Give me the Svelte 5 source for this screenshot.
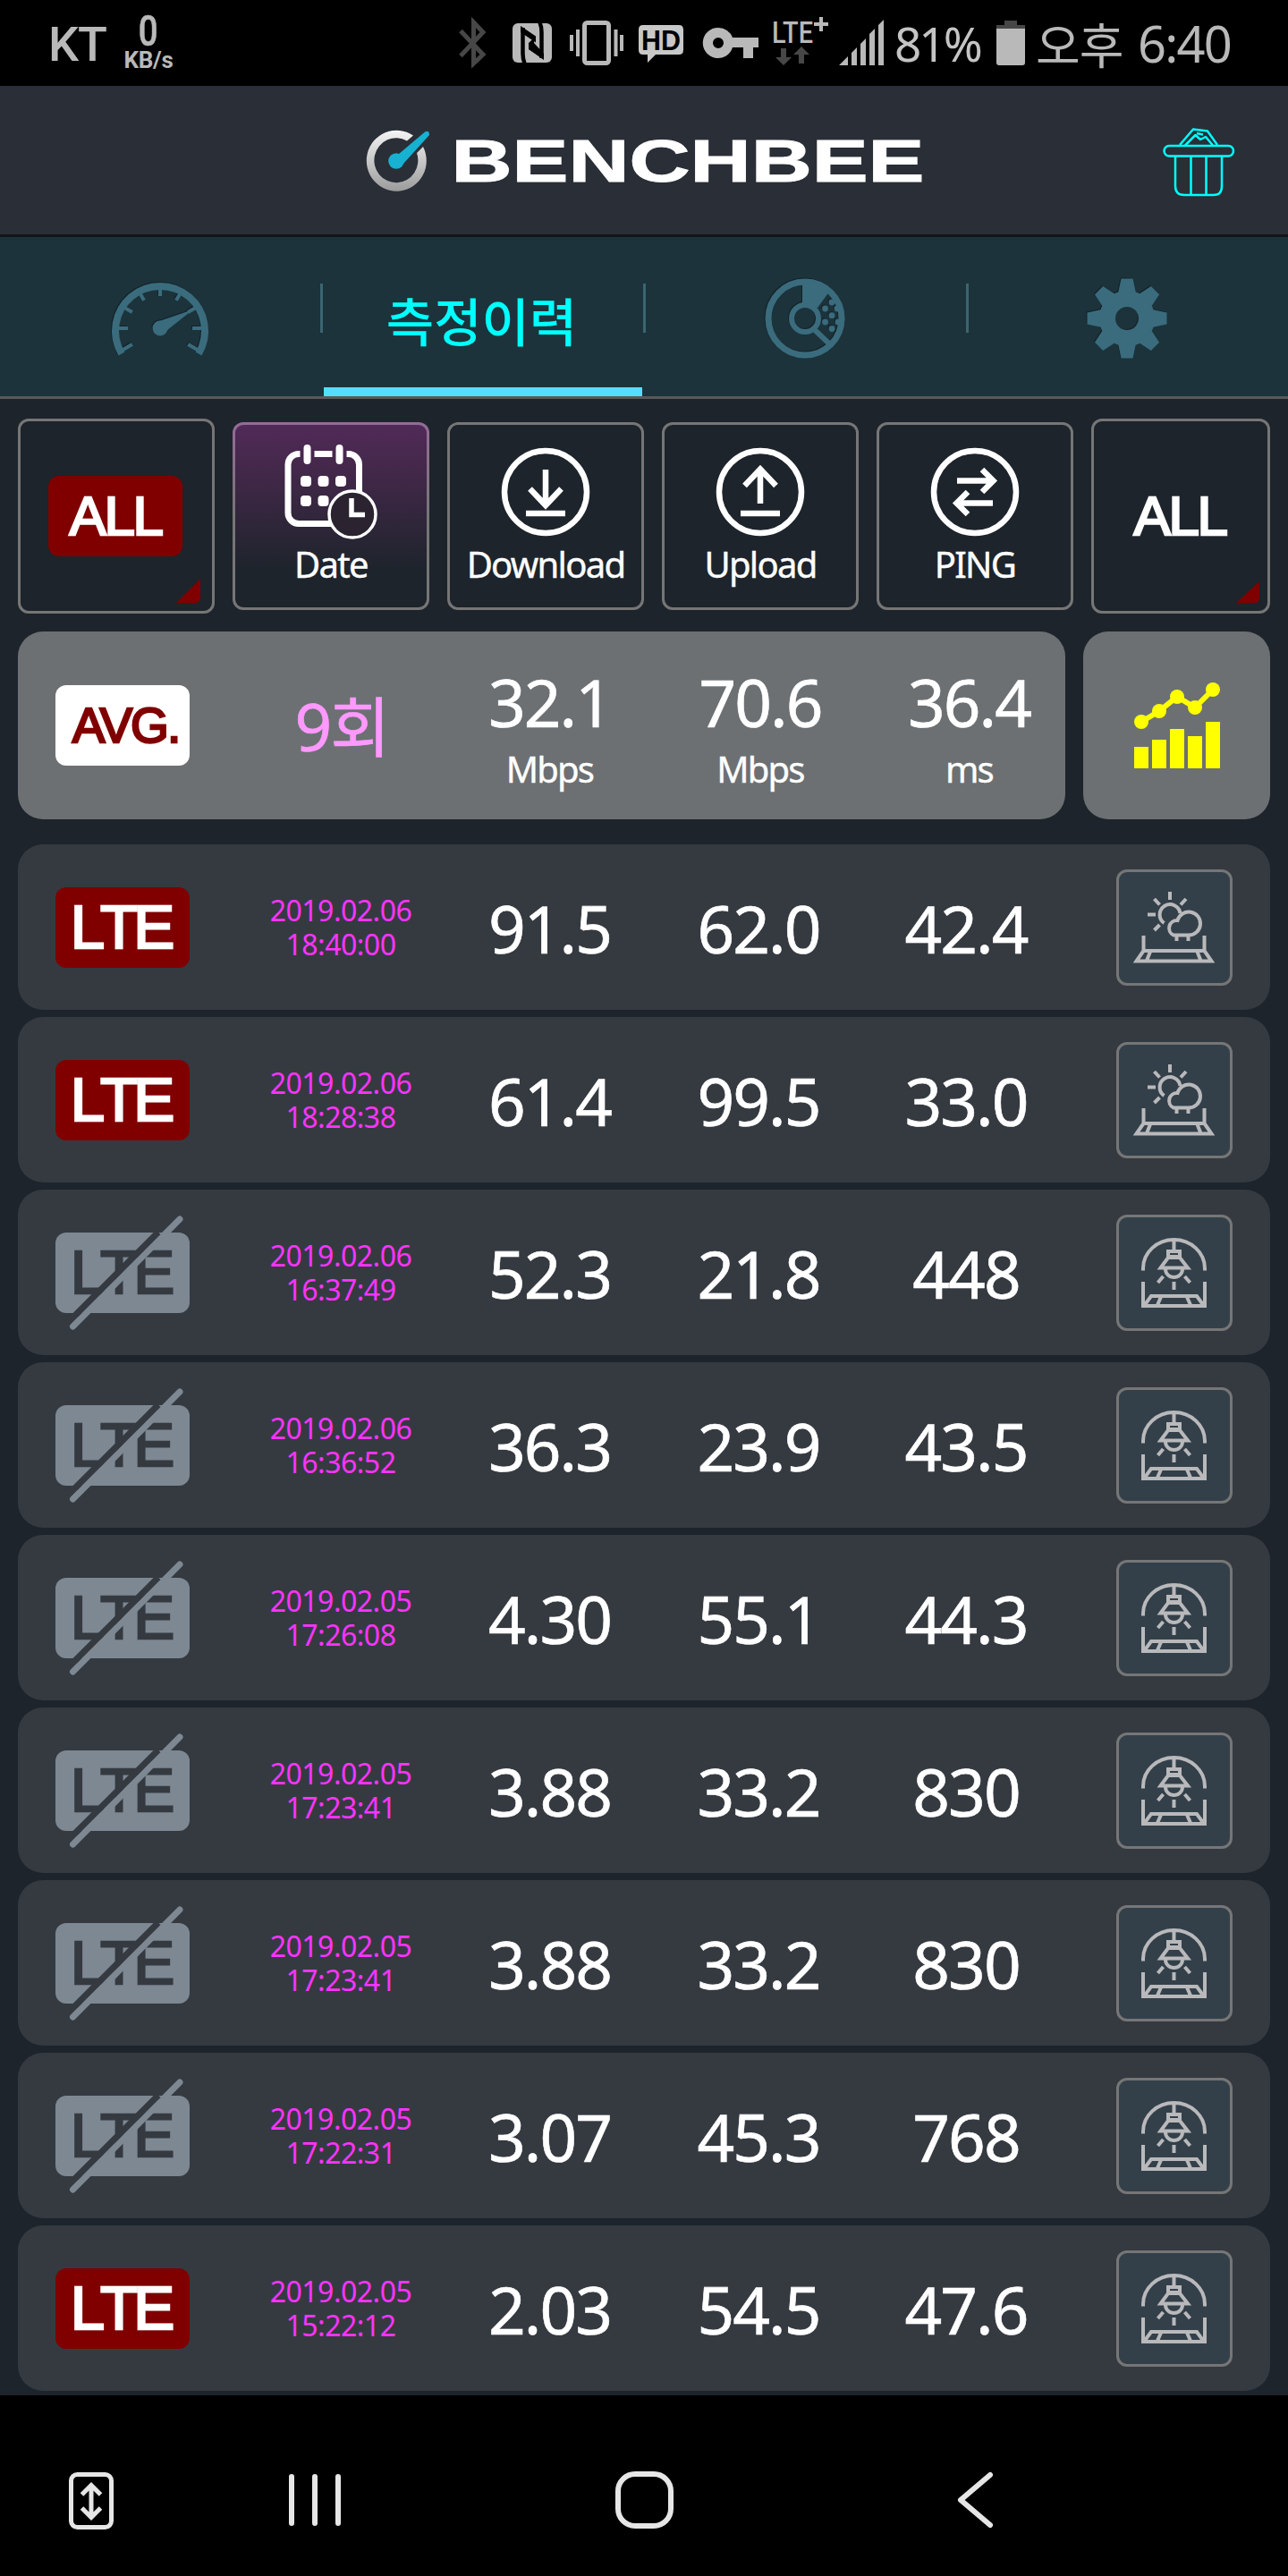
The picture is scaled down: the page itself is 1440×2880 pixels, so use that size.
<script>
  const gaugeTicks = [-120, -90, -60, -30, 0, 30, 60, 90, 120];
  const gearTeeth = [0, 45, 90, 135, 180, 225, 270, 315];

  const average = {
    count: '9회',
    down: '32.1',
    up: '70.6',
    ping: '36.4',
  };

  const records = [
    { on: true, date: '2019.02.06', time: '18:40:00', down: '91.5', up: '62.0', ping: '42.4', place: 'outdoor' },
    { on: true, date: '2019.02.06', time: '18:28:38', down: '61.4', up: '99.5', ping: '33.0', place: 'outdoor' },
    { on: false, date: '2019.02.06', time: '16:37:49', down: '52.3', up: '21.8', ping: '448', place: 'indoor' },
    { on: false, date: '2019.02.06', time: '16:36:52', down: '36.3', up: '23.9', ping: '43.5', place: 'indoor' },
    { on: false, date: '2019.02.05', time: '17:26:08', down: '4.30', up: '55.1', ping: '44.3', place: 'indoor' },
    { on: false, date: '2019.02.05', time: '17:23:41', down: '3.88', up: '33.2', ping: '830', place: 'indoor' },
    { on: false, date: '2019.02.05', time: '17:23:41', down: '3.88', up: '33.2', ping: '830', place: 'indoor' },
    { on: false, date: '2019.02.05', time: '17:22:31', down: '3.07', up: '45.3', ping: '768', place: 'indoor' },
    { on: true, date: '2019.02.05', time: '15:22:12', down: '2.03', up: '54.5', ping: '47.6', place: 'indoor' },
  ];
</script>

<div class="screen">
  <div class="status-bar">
    <span class="carrier">KT</span>
    <div class="net-speed">
      <span class="speed-value">0</span>
      <span class="speed-unit">KB/s</span>
    </div>
    <svg class="status-icons" viewBox="505 0 490 96" width="490" height="96">
      <path d="M515 34.500L540 61L529.500 71V25L540 36L515 62.500" fill="none" stroke="#474747" stroke-width="5" />
      <rect x="573" y="26" width="44" height="44" rx="6" fill="#b9b9b9" />
      <path d="M582 29L599 41V48L591 42.500V49L608 67V71L591 54V49L599 56V41Z" fill="none" />
      <path d="M582 29L599 40.500V47.500L582 36ZM591 48L608 60V67L591 55Z" />
      <path d="M584.500 31V60Q584.500 66 586.500 71M605.500 65V36Q605.500 30 603.500 25" fill="none" stroke="#000" stroke-width="4.500" />
      <path d="M597 42.500V48L608 60V66L591 55V48" />
      <rect x="653.500" y="25.500" width="27" height="45" rx="3" fill="none" stroke="#b9b9b9" stroke-width="5" />
      <path d="M639 39V57M646 33V63M688.500 33V63M695 39V57" stroke="#b9b9b9" stroke-width="4" />
      <path d="M719 28H759Q764 28 764 33V56Q764 61 759 61H733L724 70V61H719Q714 61 714 56V33Q714 28 719 28Z" fill="#c8c8c8" />
      <text x="717" y="55.500" class="hd" textLength="44" lengthAdjust="spacingAndGlyphs">HD</text>
      <path d="M803 31a17 17 0 1 0 16 22h12v12h11v-12h6v-11h-29a17 17 0 0 0-16-11zM803 42a6 6 0 1 1 0 12a6 6 0 0 1 0-12z" fill="#b9b9b9" fill-rule="evenodd" />
      <text x="863" y="48" class="lte" textLength="46" lengthAdjust="spacingAndGlyphs">LTE</text>
      <path d="M918 19V35M910 27H926" stroke="#b9b9b9" stroke-width="4" />
      <path d="M873 54H879V64H885L876 73L867 64H873ZM893 71H899V61H905L896 52L887 61H893Z" fill="#474747" />
      <path d="M938 73L948 63V73ZM952 59L958 53V73H952ZM962 49L968 43V73H962ZM972 38L978 32V73H972ZM982 28L988 22V73H982Z" fill="#b9b9b9" />
    </svg>
    <span class="battery-level">81%</span>
    <svg class="battery" viewBox="0 0 32 50" width="32" height="50">
      <path d="M9 0H23V5H32V10H0V5H9Z" fill="#474747" />
      <path d="M0 9H32V47Q32 50 29 50H3Q0 50 0 47Z" fill="#b9b9b9" />
    </svg>
    <span class="meridiem">오후</span>
    <span class="clock">6:40</span>
  </div>

  <header class="app-header">
    <svg class="logo" viewBox="400 130 640 100" width="640" height="100">
      <defs>
        <linearGradient id="ring" x1="0" y1="0" x2="0" y2="1">
          <stop offset="0" stop-color="#f4f4f4" />
          <stop offset="1" stop-color="#9c9c9c" />
        </linearGradient>
      </defs>
      <path
        d="M462 152.500A33.500 34 0 1 0 473 165L466 172A24.500 25 0 1 1 455 158.500Z"
        fill="url(#ring)"
      />
      <path d="M446 173L475 148.500Q480 146 480 152L451 184Z" fill="#17b1d1" />
      <circle cx="443" cy="181" r="8.800" fill="#17b1d1" />
      <text x="504.500" y="203.500" class="brand" textLength="529" lengthAdjust="spacingAndGlyphs">BENCHBEE</text>
    </svg>
    <svg class="trash" viewBox="1298 140 84 82" width="84" height="82">
      <g fill="none" stroke="#0ff" stroke-width="2.500" stroke-linejoin="round">
        <rect x="1301.500" y="163" width="77.500" height="11.500" rx="5.700" />
        <path d="M1319 162L1334 144.500L1350 146.500L1361 162M1325 162.500L1336.500 151L1342 156L1348 153L1356 162.500M1338 149L1345 150.500" />
        <path d="M1314 175V208Q1314 218 1324 218H1357Q1366 218 1366 208V175M1331.500 175V218M1348.500 175V218" />
      </g>
    </svg>
  </header>

  <nav class="tabs">
    <div class="tab">
      <svg viewBox="-56 -56 112 92" width="112" height="92" class="tab-icon gauge">
        <path d="M-43 28.500A50 50 0 1 1 43 28.500" fill="none" stroke="#3a6c7d" stroke-width="8" />
        {#each gaugeTicks as angle}
          <path d="M-2 -48H2V-36H-2Z" transform="rotate({angle})" />
        {/each}
        <circle r="8.500" />
        <path d="M-1 -8L37 -21L8 2Z" />
      </svg>
    </div>
    <div class="tab active">측정이력</div>
    <div class="tab">
      <svg viewBox="-47 -47 94 94" width="94" height="94" class="tab-icon">
        <circle r="41" fill="none" stroke="#3a6c7d" stroke-width="7" />
        <circle r="15" fill="none" stroke="#3a6c7d" stroke-width="6" />
        <path d="M-3 -41L0 -42A42 42 0 0 1 28 -31L14 -12L-3 -15Z" />
        <path d="M11 13L30 31" stroke="#3a6c7d" stroke-width="6" />
        {#each [[22.5, -11], [30, -18], [22.5, 4], [30, -3.3], [37, 4], [30, 11.5], [36, -11]] as [x, y]}
          <circle cx={x} cy={y} r="3.400" />
        {/each}
      </svg>
    </div>
    <div class="tab">
      <svg viewBox="-47 -47 94 94" width="94" height="94" class="tab-icon">
        <circle r="22" fill="none" stroke="#3a6c7d" stroke-width="18" />
        {#each gearTeeth as angle}
          <path d="M-10 -28L-6.500 -44.500H6.500L10 -28Z" transform="rotate({angle})" />
        {/each}
      </svg>
    </div>
  </nav>

  <main>
    <div class="filters">
      <div class="filter tall">
        <span class="badge all">ALL</span>
        <span class="corner"></span>
      </div>
      <div class="filter selected">
        <svg viewBox="310 492 120 116" width="120" height="116">
          <rect x="322" y="507.500" width="79.500" height="78" rx="12" fill="none" stroke="#fff" stroke-width="7" />
          <path d="M343.500 500V512M379.500 500V512" stroke="#492850" stroke-width="16" />
          <path d="M343.500 501V515M379.500 501V515" stroke="#fff" stroke-width="8" stroke-linecap="round" />
          {#each [[342, 538], [361.5, 538], [381, 538], [342, 560], [361.5, 560]] as [x, y]}
            <rect x={x - 6} y={y - 6} width="12" height="12" rx="4" fill="#fff" />
          {/each}
          <circle cx="394" cy="575" r="26" fill="#2b2430" stroke="#fff" stroke-width="3.500" />
          <path d="M393 557V575.500H408" fill="none" stroke="#fff" stroke-width="5.500" />
        </svg>
        <span class="filter-name">Date</span>
      </div>
      <div class="filter">
        <svg viewBox="-60 -58 120 116" width="120" height="116">
          <g class="round-icon">
            <circle r="46" />
            <path d="M0 -25V13M-17.500 -3.500L0 15L17.500 -3.500M-22 24H22" />
          </g>
        </svg>
        <span class="filter-name">Download</span>
      </div>
      <div class="filter">
        <svg viewBox="-60 -58 120 116" width="120" height="116">
          <g class="round-icon">
            <circle r="46" />
            <path d="M0 13V-25M-17.500 -7L0 -25.500L17.500 -7M-22 24H22" />
          </g>
        </svg>
        <span class="filter-name">Upload</span>
      </div>
      <div class="filter">
        <svg viewBox="-60 -58 120 116" width="120" height="116">
          <g class="round-icon">
            <circle r="46" />
            <path d="M-20 -12.500H20M8 -25L20.500 -12.500L8 0M20 12.500H-20M-8 0L-20.500 12.500L-8 25" />
          </g>
        </svg>
        <span class="filter-name">PING</span>
      </div>
      <div class="filter tall last">
        <span class="badge plain">ALL</span>
        <span class="corner small"></span>
      </div>
    </div>

    <div class="summary">
      <div class="average">
        <span class="badge avg">AVG.</span>
        <span class="count">{average.count}</span>
        <div class="metric"><span class="value">{average.down}</span><span class="unit">Mbps</span></div>
        <div class="metric"><span class="value">{average.up}</span><span class="unit">Mbps</span></div>
        <div class="metric ping"><span class="value">{average.ping}</span><span class="unit">ms</span></div>
      </div>
      <div class="chart-button">
        <svg viewBox="1265 761 100 100" width="100" height="100" fill="#ff0">
          <path d="M1267 835h16v24h-16zM1287 827h16v32h-16zM1307 815h16v44h-16zM1327 823h16v36h-16zM1347 807h16v52h-16z" />
          <path d="M1275 807L1295 795L1315 779L1335 791L1355 771" fill="none" stroke="#ff0" stroke-width="6" />
          {#each [[1275, 807], [1295, 795], [1315, 779], [1335, 791], [1355, 771]] as [x, y]}
            <circle cx={x} cy={y} r="8" />
          {/each}
        </svg>
      </div>
    </div>

    <div class="records">
      {#each records as record}
        <div class="record">
          {#if record.on}
            <span class="badge lte-on">LTE</span>
          {:else}
            <span class="badge lte-off">
              LTE
              <svg class="slash" viewBox="0 -22 150 134" width="150" height="134">
                <path d="M19.500 105L139 -15" stroke="#7d8893" stroke-width="7" stroke-linecap="round" />
                <path d="M22 92.500L115 -0.500" stroke="#353a41" stroke-width="7" />
              </svg>
            </span>
          {/if}
          <div class="when"><span>{record.date}</span><span>{record.time}</span></div>
          <span class="value">{record.down}</span>
          <span class="value">{record.up}</span>
          <span class="value">{record.ping}</span>
          <div class="place">
            <svg viewBox="3 3 124 124" width="124" height="124">
              {#if record.place === 'outdoor'}
                <path d="M60 25V34M42.500 33L48.500 39.500M78 33L72 39.500M35 50.500H44M42.500 68L48.500 62" />
                <path d="M53.500 60A11.500 11.500 0 1 1 71.500 49" />
                <path d="M64 73.500H81A13 13 0 1 0 68.500 57A8.700 8.700 0 0 0 64 73.500ZM67.500 73V80M80.500 73V80" />
                <path d="M30.500 74V91H98.500V74M30.500 91L22.500 102.500H106.500L98.500 91M38 92L34 102M90.500 92L94.500 102" />
              {:else}
                <path d="M30 62.500V60A34.500 32 0 0 1 99 60V62.500M64.500 28V40" />
                <path d="M58 41H71V47H58ZM58 48H71L80 59.500H49.500ZM55 61A9.500 9 0 0 0 74 61" />
                <path d="M52.500 69L46.500 76M64.500 75V84M76.500 69L82.500 76" />
                <path d="M30 75V102H99V75M31 102L39 91H90L98 102M50 92L46 101M79 92L83 101" />
              {/if}
            </svg>
          </div>
        </div>
      {/each}
    </div>
  </main>

  <div class="nav-bar">
    <svg viewBox="0 2678 1440 202" width="1440" height="202" fill="none" stroke="#e6e6e6">
      <rect x="79.500" y="2766.500" width="45" height="59" rx="7" stroke-width="5" />
      <path d="M102 2780V2813M91.500 2789L102 2778.500L112.500 2789M91.500 2804L102 2814.500L112.500 2804" stroke-width="5" />
      <path d="M326 2769V2821M352 2769V2821M378 2769V2821" stroke-width="6" stroke-linecap="round" />
      <rect x="691" y="2766" width="59" height="58" rx="19" stroke-width="6" />
      <path d="M1107 2767L1074 2795L1107 2823" stroke-width="6" stroke-linecap="round" stroke-linejoin="round" />
    </svg>
  </div>
</div>

<style>
  :global(body) {
    margin: 0;
    background: #1d242b;
  }

  .screen {
    width: 1440px;
    height: 2880px;
    overflow: hidden;
    display: flex;
    flex-direction: column;
    background: #1d242b;
    color: #fff;
    font-family: 'Noto Sans', 'Noto Sans CJK KR', sans-serif;
  }

  svg {
    display: block;
    flex: none;
  }

  .status-bar {
    display: flex;
    align-items: center;
    height: 96px;
    flex: none;
    background: #000;
    color: #b9b9b9;
    white-space: nowrap;
  }

  .carrier {
    width: 77px;
    padding: 3px 0 0 54px;
    font: 500 54px/1 Roboto, sans-serif;
    letter-spacing: -1px;
  }

  .net-speed {
    display: flex;
    flex-direction: column;
    align-items: center;
    width: 70px;
    margin-right: 304px;
    font-family: Roboto, sans-serif;
    font-weight: 500;
  }

  .speed-value {
    font-size: 48px;
    line-height: 38px;
    transform: scaleX(0.8);
    -webkit-text-stroke: 0.6px currentColor;
  }

  .speed-unit {
    font-size: 26px;
    line-height: 26px;
    font-weight: 700;
    letter-spacing: -0.3px;
  }

  .hd {
    font: bold 31px 'Liberation Sans', sans-serif;
    fill: #000;
  }

  .lte {
    font: 500 33px Roboto, sans-serif;
    fill: #b9b9b9;
  }

  .battery-level {
    width: 114px;
    padding-left: 5px;
    font-size: 53px;
    letter-spacing: -3px;
    color: #c4c4c4;
  }

  .meridiem {
    width: 114px;
    padding-left: 12px;
    font-size: 54px;
    letter-spacing: -1px;
  }

  .clock {
    font-size: 56px;
    letter-spacing: -1.8px;
  }

  .app-header {
    display: flex;
    align-items: center;
    justify-content: space-between;
    box-sizing: border-box;
    height: 169px;
    flex: none;
    padding: 0 58px 0 400px;
    background: #2a2e36;
    border-bottom: 3px solid #131518;
  }

  .brand {
    font: bold 66px 'Liberation Sans', sans-serif;
    fill: #fff;
    stroke: #fff;
    stroke-width: 1px;
  }

  .trash {
    margin-top: 4px;
  }

  .tabs {
    display: grid;
    grid-template-columns: 358px 361px 361px 360px;
    box-sizing: border-box;
    height: 181px;
    flex: none;
    background: #1c333b;
    border-bottom: 3px solid #595959;
  }

  .tab {
    display: flex;
    align-items: center;
    justify-content: center;
    box-sizing: border-box;
    padding-top: 4px;
    background: linear-gradient(#3c6570, #3c6570) left 0 top 52px / 3px 55px no-repeat;
  }

  .tab:first-child {
    background: none;
  }

  .tab.active {
    padding: 6px 0 0 0;
    color: #0ff;
    font-family: 'Noto Sans CJK KR', sans-serif;
    font-weight: 500;
    font-size: 58px;
    line-height: 1;
    background:
      linear-gradient(#3c6570, #3c6570) left 0 top 52px / 3px 55px no-repeat,
      linear-gradient(#56defc, #56defc) left 4px bottom 0 / 356px 10px no-repeat;
  }

  .tab-icon {
    fill: #3a6c7d;
    overflow: visible;
    filter: drop-shadow(-1px -1px 0 #142329);
  }

  .gauge {
    margin-top: 2px;
  }

  main {
    flex: none;
    height: 2232px;
    overflow: hidden;
    padding: 0 20px;
    box-sizing: border-box;
  }

  .filters {
    display: flex;
    gap: 20px;
    align-items: center;
    padding-top: 22px;
    height: 218px;
  }

  .filter {
    position: relative;
    box-sizing: border-box;
    width: 220px;
    height: 210px;
    border: 3px solid #767676;
    border-radius: 12px;
    display: flex;
    flex-direction: column;
    align-items: center;
    padding-top: 17px;
  }

  .filter.tall {
    height: 218px;
    justify-content: center;
    padding: 0;
  }

  .filter.last {
    width: 200px;
  }

  .filter.selected {
    border-color: transparent;
    background:
      linear-gradient(#512a58, #43284a 25%, #1d242b 80%) padding-box,
      linear-gradient(#946b97, #767676 50%) border-box;
  }

  .filter-name {
    font-size: 40px;
    line-height: 46px;
    letter-spacing: -1.7px;
    -webkit-text-stroke: 0.4px currentColor;
  }

  .corner {
    position: absolute;
    right: 13px;
    bottom: 9px;
    width: 27px;
    height: 27px;
    background: #800000;
    border-bottom-right-radius: 5px;
    clip-path: polygon(100% 0, 100% 100%, 0 100%);
  }

  .corner.small {
    right: 9px;
    width: 26px;
    height: 24px;
  }

  .round-icon {
    fill: none;
    stroke: #fff;
    stroke-width: 6.5px;
  }

  .badge {
    position: relative;
    display: flex;
    align-items: center;
    justify-content: center;
    box-sizing: border-box;
    width: 150px;
    height: 90px;
    border-radius: 12px;
    font-family: 'Liberation Sans', sans-serif;
    line-height: 1;
    -webkit-text-stroke: 2.5px currentColor;
  }

  .filter .badge {
    margin-right: 2px;
  }

  .all {
    background: #800000;
    font-size: 62px;
    letter-spacing: -2.5px;
  }

  .plain {
    font-size: 62px;
    letter-spacing: -2.5px;
  }

  .avg {
    background: #fff;
    color: #800000;
    font-size: 55px;
    letter-spacing: -2px;
    padding-left: 7px;
  }

  .lte-on {
    background: #800000;
    font-size: 69px;
    font-kerning: none;
    letter-spacing: -5px;
    padding-right: 5px;
  }

  .lte-off {
    background: #7d8893;
    color: #353a41;
    font-size: 69px;
    font-kerning: none;
    letter-spacing: -5px;
    padding-right: 5px;
  }

  .slash {
    position: absolute;
    left: 0;
    top: -22px;
  }

  .summary {
    display: flex;
    gap: 20px;
    margin-top: 20px;
    height: 210px;
  }

  .average {
    display: grid;
    grid-template-columns: 202px 234px 233px 238px 222px;
    align-items: center;
    box-sizing: border-box;
    width: 1171px;
    padding-left: 42px;
    background: #6c7073;
    border-radius: 28px;
  }

  .count {
    text-align: center;
    color: #ff99ff;
    font-size: 73px;
    line-height: 1;
    letter-spacing: -2px;
    padding-left: 2px;
    -webkit-text-stroke: 0.6px currentColor;
  }

  .metric {
    display: flex;
    flex-direction: column;
    align-items: center;
    padding-top: 18px;
  }

  .metric .value {
    line-height: 80px;
  }

  .metric.ping {
    padding-left: 7px;
  }

  .unit {
    font-size: 40px;
    line-height: 70px;
    letter-spacing: -1.8px;
    -webkit-text-stroke: 0.4px currentColor;
  }

  .value {
    font-size: 73px;
    line-height: 1;
    letter-spacing: -1.9px;
    text-align: center;
    -webkit-text-stroke: 0.6px currentColor;
  }

  .chart-button {
    display: flex;
    align-items: center;
    justify-content: center;
    width: 209px;
    background: #6c7073;
    border-radius: 28px;
  }

  .records {
    display: flex;
    flex-direction: column;
    gap: 8px;
    margin-top: 28px;
  }

  .record {
    display: grid;
    grid-template-columns: 202px 234px 233px 234px 230px 1fr;
    align-items: center;
    box-sizing: border-box;
    height: 185px;
    padding: 0 42px;
    background: #353a41;
    border-radius: 28px;
  }

  .record .value {
    padding-top: 2px;
  }

  .when {
    display: flex;
    flex-direction: column;
    align-items: center;
    padding-top: 1px;
    color: #ff33ff;
    font-size: 32px;
    line-height: 38px;
    letter-spacing: -0.5px;
  }

  .place {
    justify-self: end;
    box-sizing: border-box;
    width: 130px;
    height: 130px;
    border: 3px solid #767676;
    border-radius: 12px;
    background: #33404a;
  }

  .place path {
    fill: none;
    stroke: #b9b9bb;
    stroke-width: 4px;
  }

  .nav-bar {
    flex: 1;
    background: #000;
  }
</style>
